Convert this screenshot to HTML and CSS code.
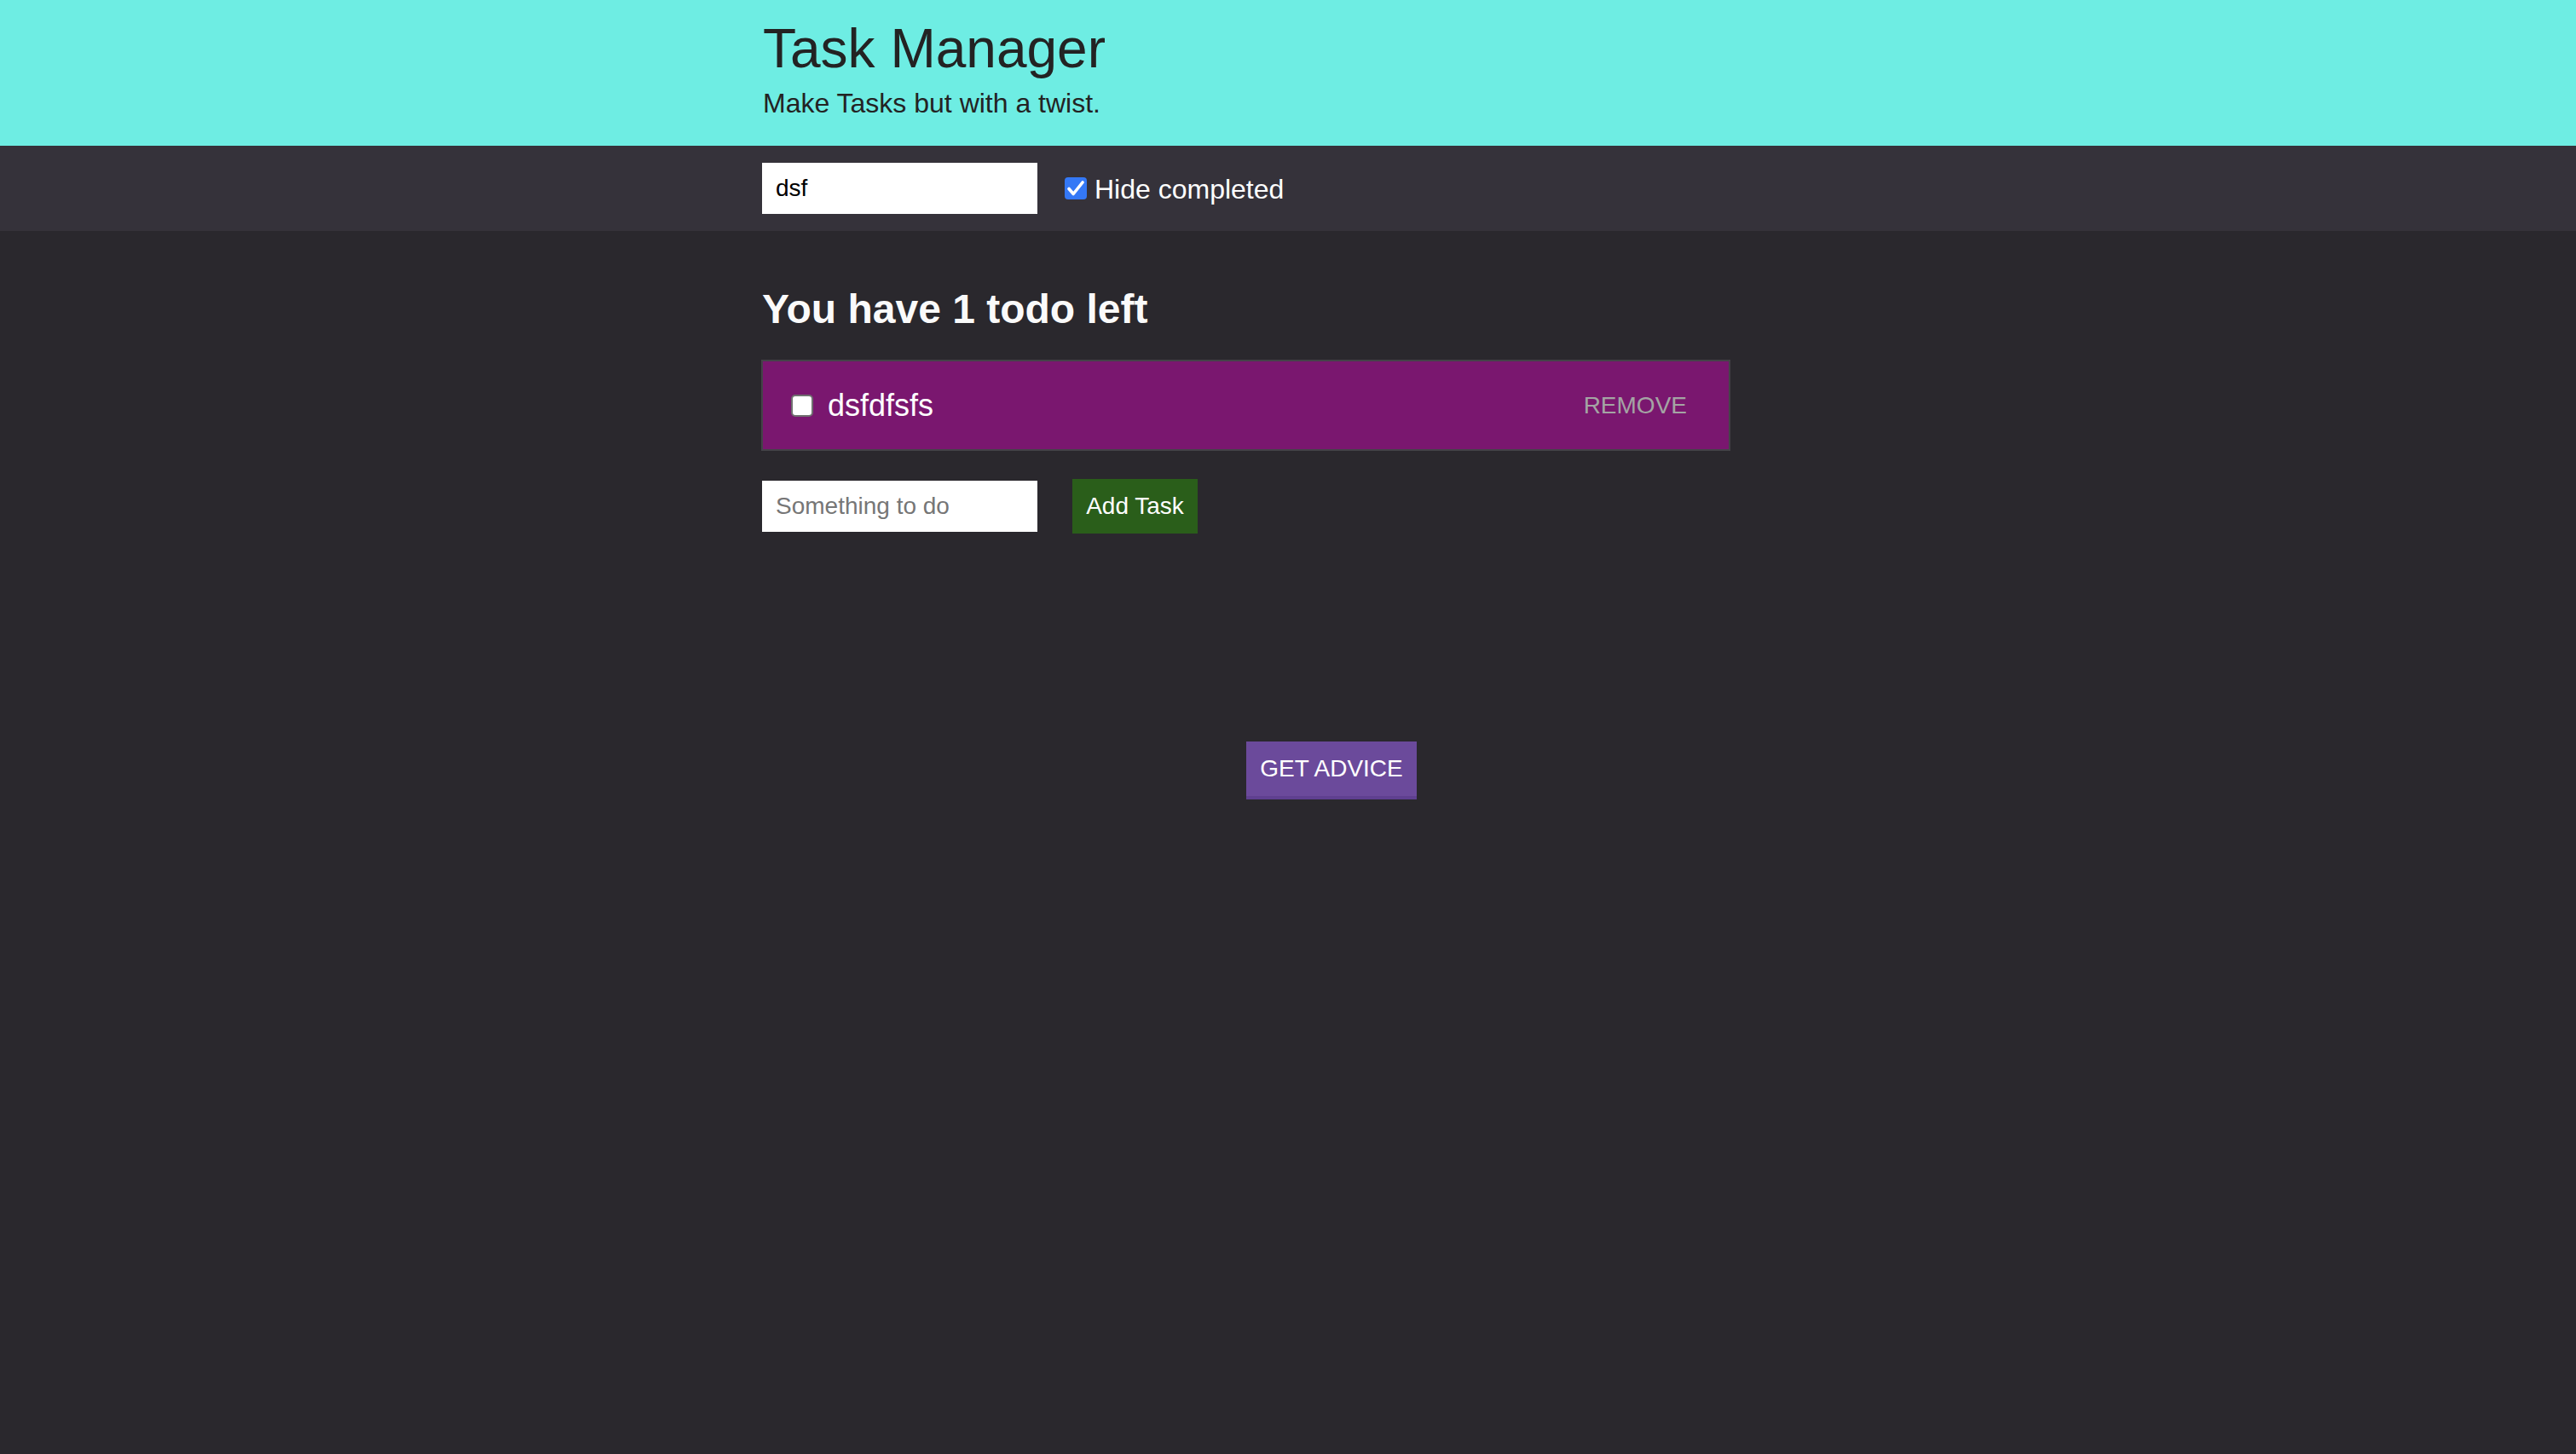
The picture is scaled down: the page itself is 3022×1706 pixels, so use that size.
FILE: index.html
```html
<!DOCTYPE html>
<html lang="en">
<head>
<meta charset="utf-8">
<title>Task Manager</title>
<link rel="stylesheet" href="styles.css">
</head>
<body>
<header class="masthead">
  <div class="wrap head-inner">
    <h1 class="title">Task Manager</h1>
    <p class="subtitle">Make Tasks but with a twist.</p>
  </div>
</header>
<section class="toolbar">
  <div class="wrap toolbar-row">
    <input class="text-input" type="text" value="dsf">
    <label class="filter">
      <span class="check check-on">
        <input type="checkbox" checked>
        <svg class="tick" viewBox="0 0 26 26" width="26" height="26"><path d="M5 13.5 L10.2 19.5 L21 6" fill="none" stroke="#fff" stroke-width="3.6" stroke-linecap="round" stroke-linejoin="round"/></svg>
      </span>
      <span class="filter-text">Hide completed</span>
    </label>
  </div>
</section>
<main class="wrap content">
  <h2 class="count">You have 1 todo left</h2>
  <div class="todo">
    <span class="check check-off"><input type="checkbox"></span>
    <span class="todo-text">dsfdfsfs</span>
    <button class="remove">REMOVE</button>
  </div>
  <div class="add-row">
    <input class="text-input" type="text" placeholder="Something to do">
    <button class="add-btn">Add Task</button>
  </div>
  <div class="advice-row">
    <button class="advice-btn">GET ADVICE</button>
  </div>
</main>
</body>
</html>
```

FILE: styles.css
```css
html, body {
  margin: 0;
  padding: 0;
}
body {
  background: #2a282d;
  font-family: "Liberation Sans", Arial, Helvetica, sans-serif;
  min-height: 1706px;
}
.wrap {
  width: 1236px;
  margin: 0 auto;
  box-sizing: border-box;
}
.masthead {
  background: #6eede3;
  height: 171px;
  box-sizing: border-box;
  padding-top: 21px;
}
.head-inner {
  padding-left: 2px;
}
.title {
  margin: 0;
  font-size: 64px;
  line-height: 72px;
  font-weight: 400;
  color: #232323;
}
.subtitle {
  margin: 10px 0 0;
  font-size: 32px;
  line-height: 36px;
  color: #232323;
}
.toolbar {
  background: #35323a;
  height: 100px;
}
.toolbar-row {
  height: 100px;
  display: flex;
  align-items: center;
  padding-left: 1px;
}
.text-input {
  width: 323px;
  height: 60px;
  box-sizing: border-box;
  border: none;
  outline: none;
  padding: 0 16px;
  margin: 0;
  background: #fff;
  color: #000;
  font-family: "Liberation Sans", Arial, sans-serif;
  font-size: 28px;
}
.text-input::placeholder {
  color: #767676;
}
.filter {
  display: flex;
  align-items: center;
  margin-left: 32px;
  color: #fff;
  font-size: 32px;
}
.filter-text {
  margin-left: 9px;
  line-height: 36px;
  padding-top: 2px;
}
.check {
  position: relative;
  display: inline-block;
  width: 26px;
  height: 26px;
  flex: none;
}
.check input {
  -webkit-appearance: none;
  appearance: none;
  margin: 0;
  width: 26px;
  height: 26px;
  box-sizing: border-box;
  border-radius: 4px;
  display: block;
}
.check-on input {
  background: #3478f6;
  border: none;
}
.check-off input {
  background: #fff;
  border: 2px solid #707070;
  border-radius: 5px;
}
.tick {
  position: absolute;
  left: 0;
  top: 0;
  pointer-events: none;
}
.content {
  padding-top: 64px;
}
.count {
  margin: 0;
  font-size: 48px;
  line-height: 56px;
  font-weight: 700;
  color: #fafafa;
  padding-left: 1px;
}
.todo {
  margin-top: 31px;
  width: 1137px;
  height: 107px;
  box-sizing: border-box;
  border: 2px solid #444348;
  background: #7a176f;
  display: flex;
  align-items: center;
  padding: 0 49px 0 33px;
}
.todo-text {
  margin-left: 17px;
  color: #fff;
  font-size: 36px;
  flex: 1;
}
.remove {
  background: none;
  border: none;
  padding: 0;
  color: #a4a4a4;
  font-family: "Liberation Sans", Arial, sans-serif;
  font-size: 28px;
  cursor: pointer;
}
.add-row {
  margin-top: 33px;
  display: flex;
  align-items: center;
  height: 64px;
  padding-left: 1px;
}
.add-btn {
  margin-left: 41px;
  width: 147px;
  height: 64px;
  border: none;
  background: #2a5e1a;
  color: #fff;
  font-family: "Liberation Sans", Arial, sans-serif;
  font-size: 28px;
  padding: 0;
}
.advice-row {
  margin-top: 244px;
  padding-left: 569px;
}
.advice-btn {
  width: 200px;
  height: 68px;
  border: none;
  background: #6b4a9b;
  box-shadow: inset 0 -4px 0 #5f4090;
  color: #fff;
  font-family: "Liberation Sans", Arial, sans-serif;
  font-size: 28px;
  padding: 0 0 4px;
}
```
